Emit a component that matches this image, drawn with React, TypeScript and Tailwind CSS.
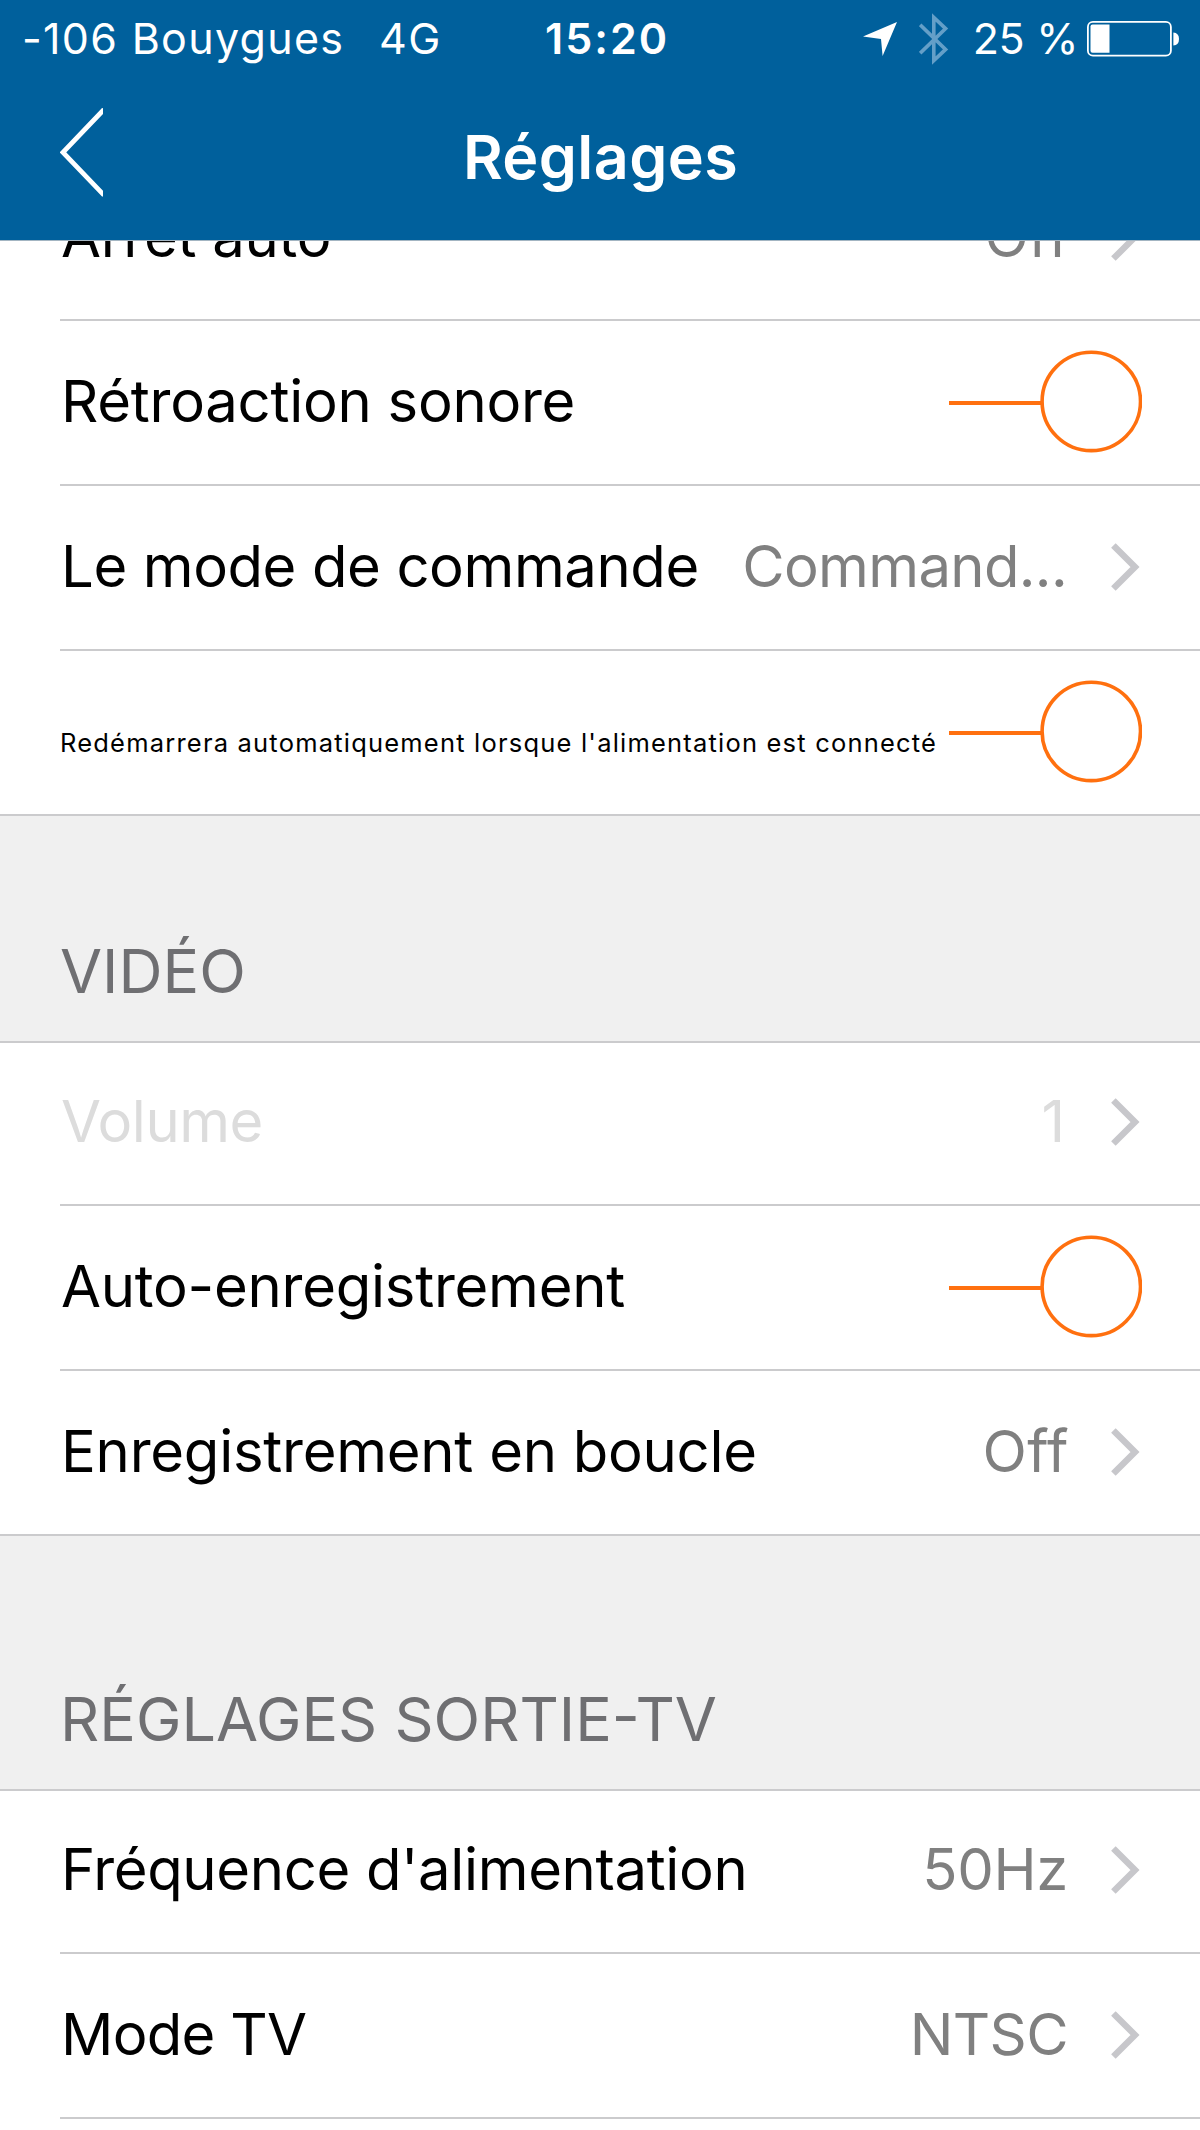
import { ReactNode } from 'react';
import clsx from 'clsx';

type RowProps = {
  label: string;
  value?: string;
  toggle?: boolean;
  disabled?: boolean;
  last?: boolean;
  height?: string;
  labelClass?: string;
  valueClass?: string;
};

function Chevron() {
  return (
    <svg width="31" height="48" viewBox="0 0 31 48" fill="none" className="ml-[43px] shrink-0">
      <path d="M2.4 2.4L24 24L2.4 45.6" stroke="#c7c7cb" strokeWidth="6.4" />
    </svg>
  );
}

function Toggle() {
  return (
    <svg width="193" height="103" viewBox="0 0 193 103" fill="none" className="shrink-0">
      <path d="M0 53H94" stroke="#ff700f" strokeWidth="4" />
      <circle cx="142.3" cy="51.4" r="49.2" stroke="#ff700f" strokeWidth="3.6" />
    </svg>
  );
}

function Row({
  label,
  value,
  toggle,
  disabled,
  last,
  height = 'h-[165px]',
  labelClass = 'pl-px text-[58px] tracking-[-0.25px]',
  valueClass = 'tracking-[-0.3px]',
}: RowProps) {
  return (
    <div className={clsx('flex overflow-hidden bg-white', height, last ? 'border-b-2 border-[#cbcbcd]' : 'pl-[60px]')}>
      <div className={clsx('flex flex-1 items-end', last ? 'pl-[60px]' : 'border-b-2 border-[#cbcbcd]')}>
        <div className="flex h-[161px] flex-1 items-center justify-between pr-[58px] pb-1">
          <span className={clsx('whitespace-nowrap', labelClass, disabled ? 'text-[#dcdcdc]' : 'text-black')}>
            {label}
          </span>
          {toggle ? (
            <Toggle />
          ) : (
            <div className="flex items-center">
              <span className={clsx('text-[58px]', valueClass, disabled ? 'text-[#dcdcdc]' : 'text-[#808080]')}>
                {value}
              </span>
              <Chevron />
            </div>
          )}
        </div>
      </div>
    </div>
  );
}

function SectionTitle({ height, children }: { height: string; children: ReactNode }) {
  return (
    <div className={clsx('flex items-end border-b-2 border-[#cbcbcd] bg-[#f0f0f0] pb-[39px] pl-[60px]', height)}>
      <h2 className="text-[61px] leading-none text-[#6f6f72]">{children}</h2>
    </div>
  );
}

function StatusBar() {
  return (
    <div className="flex h-[77px] items-center pr-[20px] pl-[22px] text-[43px] whitespace-nowrap">
      <span className="w-[357px] tracking-[1.3px]">-106 Bouygues</span>
      <span className="w-[166px] tracking-[1.5px]">4G</span>
      <span className="font-semibold tracking-[2px]">15:20</span>
      <div className="ml-auto flex items-center">
        <svg width="34" height="34" viewBox="0 0 34 34" className="mr-[22px]">
          <path d="M0 14.6L34 0L19.6 34L18 17Z" fill="#fff" />
        </svg>
        <svg width="30" height="52" viewBox="0 0 30 52" fill="none" className="mr-6">
          <path
            d="M1.2 11.8L26.6 36.4L14.8 47.5V4.5L26.6 15.6L1.2 40.2"
            stroke="#649fc8"
            strokeWidth="3.6"
          />
        </svg>
        <span className="tracking-[-0.35px]">25 %</span>
        <svg width="92" height="36" viewBox="0 0 92 36" fill="none" className="mr-px ml-[9px]">
          <rect x="0.9" y="0.9" width="83" height="33.8" rx="5" stroke="#fff" strokeWidth="1.8" />
          <path d="M5.5 3.5H22.5V31.8H5.5Q3.5 31.8 3.5 29.8V5.5Q3.5 3.5 5.5 3.5Z" fill="#fff" />
          <path d="M86.4 11.5Q92 12 92 18Q92 24 86.4 24.5Z" fill="#fff" />
        </svg>
      </div>
    </div>
  );
}

export default function App() {
  return (
    <div className="h-[2130px] w-[1200px] overflow-hidden bg-white font-['Inter',sans-serif]">
      <header className="h-[241px] border-b border-[#a3b5c2] bg-[#00609c] text-white">
        <StatusBar />
        <div className="grid h-[163px] grid-cols-[1fr_auto_1fr] items-center px-[60px]">
          <svg width="43" height="89" viewBox="0 0 43 89" fill="none" className="mb-[12px]">
            <path d="M44 1.4L3 44.3L44 87.2" stroke="#fff" strokeWidth="4.8" />
          </svg>
          <h1 className="pb-px pl-px text-[61px] font-semibold tracking-[0.4px]">Réglages</h1>
        </div>
      </header>

      <Row label="Arrêt auto" value="On" height="h-20" valueClass="pr-[2px] tracking-[1.5px]" />
      <Row label="Rétroaction sonore" toggle />
      <Row
        label="Le mode de commande"
        value="Command..."
        labelClass="pl-px text-[58px] tracking-[-0.4px]"
        valueClass="pr-px tracking-[-0.65px]"
      />
      <Row
        label="Redémarrera automatiquement lorsque l'alimentation est connecté"
        labelClass="pt-[23px] text-[25.5px] tracking-[1.2px]"
        toggle
        last
      />

      <SectionTitle height="h-[227px]">VIDÉO</SectionTitle>
      <Row
        label="Volume"
        value="1"
        height="h-[163px]"
        labelClass="pl-px text-[58px] tracking-[-0.5px]"
        valueClass="pr-[3px]"
        disabled
      />
      <Row label="Auto-enregistrement" toggle />
      <Row label="Enregistrement en boucle" value="Off" valueClass="-mr-px tracking-[0.5px]" last />

      <SectionTitle height="h-[255px]">RÉGLAGES SORTIE-TV</SectionTitle>
      <Row
        label="Fréquence d'alimentation"
        value="50Hz"
        height="h-[163px]"
        labelClass="pl-px text-[58px] tracking-[-0.35px]"
      />
      <Row
        label="Mode TV"
        value="NTSC"
        labelClass="pl-px text-[58px] tracking-[-0.7px]"
        valueClass="tracking-[-0.6px]"
      />
    </div>
  );
}
